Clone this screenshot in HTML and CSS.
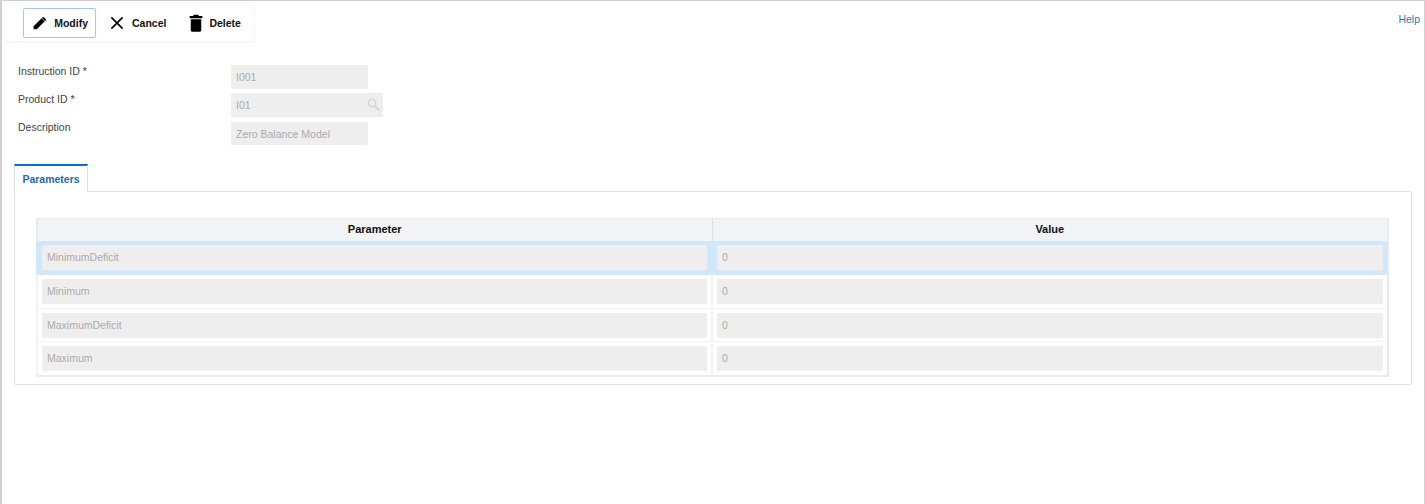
FILE: index.html
```html
<!DOCTYPE html>
<html lang="en">
<head>
<meta charset="utf-8">
<title>Instruction</title>
<link rel="stylesheet" href="styles.css">
</head>
<body>
<div class="page">
  <header class="top">
    <nav class="toolbar">
      <button class="tool tool-active" type="button">
        <svg class="icon" viewBox="0 0 24 24"><path d="M2.500 22v-5L15.200 4.300l5 5L7.500 22z M16.600 2.900a1.600 1.600 0 0 1 2.200 0l2.800 2.800a1.600 1.600 0 0 1 0 2.200l-.9.900-5-5z"/></svg>
        <span>Modify</span>
      </button>
      <button class="tool tool-cancel" type="button">
        <svg class="icon" viewBox="0 0 24 24"><path d="M4.500 4.500l15 15M19.500 4.500l-15 15" fill="none" stroke="#000" stroke-width="2.200"/></svg>
        <span>Cancel</span>
      </button>
      <button class="tool tool-delete" type="button">
        <svg class="icon" viewBox="0 0 24 24"><path d="M9 1h6l1 1.500h4.500v3h-17v-3H8z M5 7h14v14.500a2.200 2.200 0 0 1-2.200 2H7.200A2.200 2.200 0 0 1 5 21.500z"/></svg>
        <span>Delete</span>
      </button>
    </nav>
    <a class="help" href="#">Help</a>
  </header>

  <form class="fields">
    <label class="label">Instruction ID *</label>
    <div class="input input-short">I001</div>
    <label class="label">Product ID *</label>
    <div class="input input-long">I01
      <svg class="search" viewBox="0 0 14 14"><circle cx="5.500" cy="5.500" r="4" fill="none" stroke="#d2d2d2" stroke-width="1.500"/><path d="M8.500 8.500l4.500 4.500" stroke="#d2d2d2" stroke-width="2"/></svg>
    </div>
    <label class="label">Description</label>
    <div class="input input-short input-last">Zero Balance Model</div>
  </form>

  <div class="tabs"><div class="tab">Parameters</div></div>
  <section class="panel">
    <table class="grid">
      <colgroup><col class="col-a"><col></colgroup>
      <thead><tr><th>Parameter</th><th>Value</th></tr></thead>
      <tbody>
        <tr class="selected"><td><div class="cell">MinimumDeficit</div></td><td><div class="cell">0</div></td></tr>
        <tr><td><div class="cell">Minimum</div></td><td><div class="cell">0</div></td></tr>
        <tr class="short"><td><div class="cell">MaximumDeficit</div></td><td><div class="cell">0</div></td></tr>
        <tr><td><div class="cell">Maximum</div></td><td><div class="cell">0</div></td></tr>
      </tbody>
    </table>
  </section>
</div>
</body>
</html>
```
FILE: styles.css
```css
* { box-sizing: border-box; }
html, body { margin: 0; height: 100%; }
body {
  font-family: "Liberation Sans", Arial, sans-serif;
  font-size: 10.5px;
  background: #fff;
  overflow: hidden;
}
.page {
  height: 504px;
  border-top: 1px solid #d0d0d0;
  border-left: 2px solid #d0d0d0;
  border-right: 1px solid #d0d0d0;
  padding: 0 12px;
}
.top {
  display: flex;
  justify-content: space-between;
  align-items: flex-start;
  margin-left: -9px;
  margin-right: -12px;
  height: 41px;
}
.toolbar {
  display: flex;
  align-items: center;
  width: 249px;
  height: 40px;
  padding: 3px 0 0 18px;
  box-shadow: 0 1px 3px rgba(0, 0, 0, 0.07);
}
.tool {
  display: flex;
  align-items: center;
  gap: 5px;
  height: 30px;
  padding: 0 7px 0 8px;
  border: 1px solid transparent;
  border-radius: 2px;
  background: none;
  font: bold 10.5px "Liberation Sans", Arial, sans-serif;
  color: #111;
}
.tool-active {
  width: 73px;
  gap: 7px;
  border-color: #a3c8f5;
  box-shadow: 0 0 1px #bcd6f5;
  margin-right: 3px;
}
.tool-cancel { margin-right: 4px; gap: 6px; }
.tool-delete { gap: 4px; }
.icon { width: 18px; height: 18px; display: block; }
.help {
  margin: 12px 4px 0 0;
  color: #1f80a8;
  font-size: 10.5px;
  text-decoration: none;
}
.fields {
  display: grid;
  grid-template-columns: 213px auto;
  justify-content: start;
  margin: 23px 0 0 4px;
}
.label { color: #444; line-height: 12px; height: 28px; }
.input {
  position: relative;
  height: 24px;
  width: 137px;
  padding: 0 5px;
  line-height: 24px;
  background: #eeeeef;
  color: #ababab;
  border-radius: 1px;
}
.input-long { width: 152px; }
.input-last { margin-top: 1px; height: 23px; }
.search { position: absolute; right: 3px; top: 5px; width: 13px; height: 13px; }
.tabs { margin-top: 15px; height: 27px; }
.tab {
  width: 74px;
  height: 28px;
  position: relative;
  z-index: 1;
  border: 1px solid #d8e0e8;
  border-top: 2px solid #0572ce;
  border-bottom: 0;
  background: #fff;
  color: #2a6aa8;
  font-weight: bold;
  text-align: center;
  line-height: 26px;
}
.panel {
  width: 1398px;
  height: 194px;
  padding: 26px 21px 0;
  border: 1px solid #dde3e8;
  border-radius: 2px;
}
.grid {
  width: 1353px;
  table-layout: fixed;
  border-collapse: collapse;
  border: 2px solid #e6e9ed;
  border-top-width: 1px;
}
.col-a { width: 675px; }
th {
  height: 22px;
  padding: 0 0 2px;
  background: #f1f3f7;
  color: #111;
  font-size: 11px;
  border-left: 1px solid #dbe1e8;
}
td {
  height: 34px;
  padding: 0 4px;
  border-left: 2px solid #f0f2f4;
  border-bottom: 1px solid #f0f2f4;
}
tr.short td { height: 33px; }
tr.selected td { background: #d0e8fa; border-color: #d0e8fa; }
.cell {
  height: 25px;
  padding: 0 5px;
  line-height: 25px;
  background: #eeeeef;
  color: #ababab;
  border-radius: 1px;
}
```
